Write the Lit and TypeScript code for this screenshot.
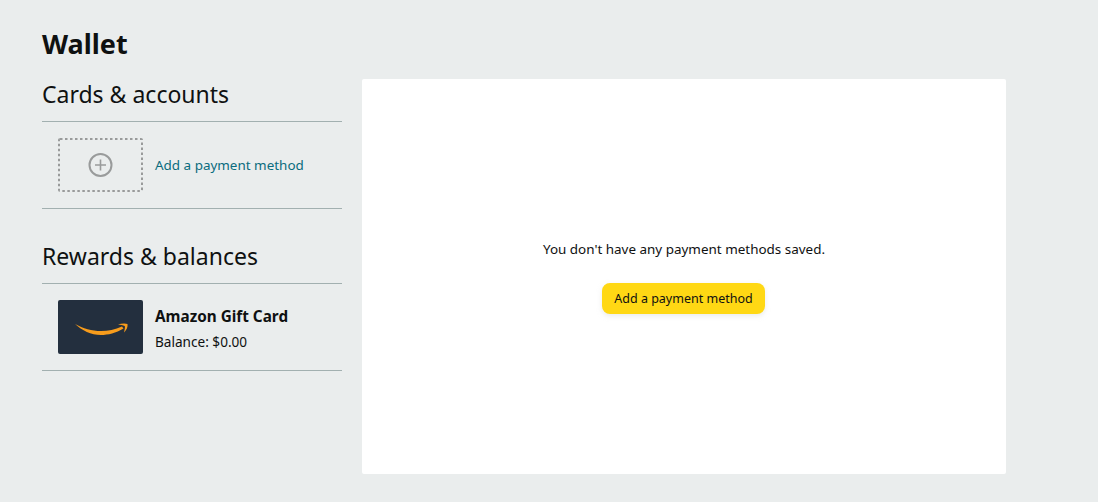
import { LitElement, html, css } from 'lit';
import { customElement } from 'lit/decorators.js';

@customElement('app-root')
export class AppRoot extends LitElement {
  static styles = css`
    :host {
      display: block;
      box-sizing: border-box;
      height: 502px;
      padding: 28px 92px 28px 42px;
      background: #eaeded;
      color: #0f1111;
      font-family: 'Noto Sans', sans-serif;
      font-size: 13.45px;
      line-height: 20px;
    }
    h1 {
      margin: 0 0 19px;
      font-size: 27px;
      line-height: 32px;
      font-weight: 700;
    }
    .columns {
      display: grid;
      grid-template-columns: 300px 644px;
      gap: 20px;
    }
    h2 {
      margin: 0;
      padding-bottom: 12px;
      font-size: 23px;
      line-height: 30px;
      font-weight: 400;
    }
    .section + .section {
      margin-top: 32px;
    }
    .row {
      display: flex;
      align-items: center;
      gap: 12px;
      padding: 16px;
      border-top: 1px solid #a2b0b0;
      border-bottom: 1px solid #a2b0b0;
    }
    .tile {
      display: block;
      width: 85px;
      height: 54px;
    }
    .link {
      color: #0a6c7e;
      text-decoration: none;
    }
    .info {
      padding-top: 2px;
    }
    .name {
      font-size: 15.3px;
      line-height: 24px;
      font-weight: 700;
    }
    .balance {
      line-height: 20px;
      margin-top: 4px;
      font-size: 13.6px;
    }
    .panel {
      height: 395px;
      display: flex;
      flex-direction: column;
      align-items: center;
      justify-content: center;
      gap: 24px;
      background: #fff;
      border-radius: 2px;
    }
    button {
      box-sizing: border-box;
      width: 163px;
      height: 31px;
      margin-right: 1px;
      padding: 0;
      border: 0;
      border-radius: 8px;
      background: #ffd814;
      box-shadow: 0 2px 5px rgba(213, 217, 217, 0.5);
      color: #0f1111;
      font: inherit;
      font-size: 12.5px;
    }
  `;

  render() {
    return html`
      <h1>Wallet</h1>
      <div class="columns">
        <div>
          <div class="section">
            <h2>Cards &amp; accounts</h2>
            <div class="row">
              <svg class="tile" viewBox="0 0 85 54" fill="none">
                <rect
                  x="1"
                  y="1"
                  width="83"
                  height="52"
                  rx="1"
                  stroke="#999b9b"
                  stroke-width="2"
                  stroke-dasharray="2.5 2.5"
                ></rect>
                <circle cx="42.5" cy="27" r="11" stroke="#999b9b" stroke-width="2"></circle>
                <path d="M42.5 21.5v11M37 27h11" stroke="#999b9b" stroke-width="1.6"></path>
              </svg>
              <a class="link" href="#">Add a payment method</a>
            </div>
          </div>
          <div class="section">
            <h2>Rewards &amp; balances</h2>
            <div class="row">
              <svg class="tile" viewBox="0 0 85 54">
                <rect width="85" height="54" rx="2" fill="#232f3e"></rect>
                <path
                  d="M17 24C25 28.5 34 31 43 31C50 31 57 29.5 64 26.5L65.5 28.5C58 33 50 35 43 35C33 35 24 30.5 17 24Z"
                  fill="#f79c1c"
                ></path>
                <path
                  d="M60 24.5C63 23.5 67 23 69.5 24C70 27 68.5 30 66 32.5C66.5 30 67.2 28 66.8 26C65 25 62.5 25 60 24.5Z"
                  fill="#f79c1c"
                ></path>
              </svg>
              <div class="info">
                <div class="name">Amazon Gift Card</div>
                <div class="balance">Balance: $0.00</div>
              </div>
            </div>
          </div>
        </div>
        <div class="panel">
          <div>You don't have any payment methods saved.</div>
          <button>Add a payment method</button>
        </div>
      </div>
    `;
  }
}
